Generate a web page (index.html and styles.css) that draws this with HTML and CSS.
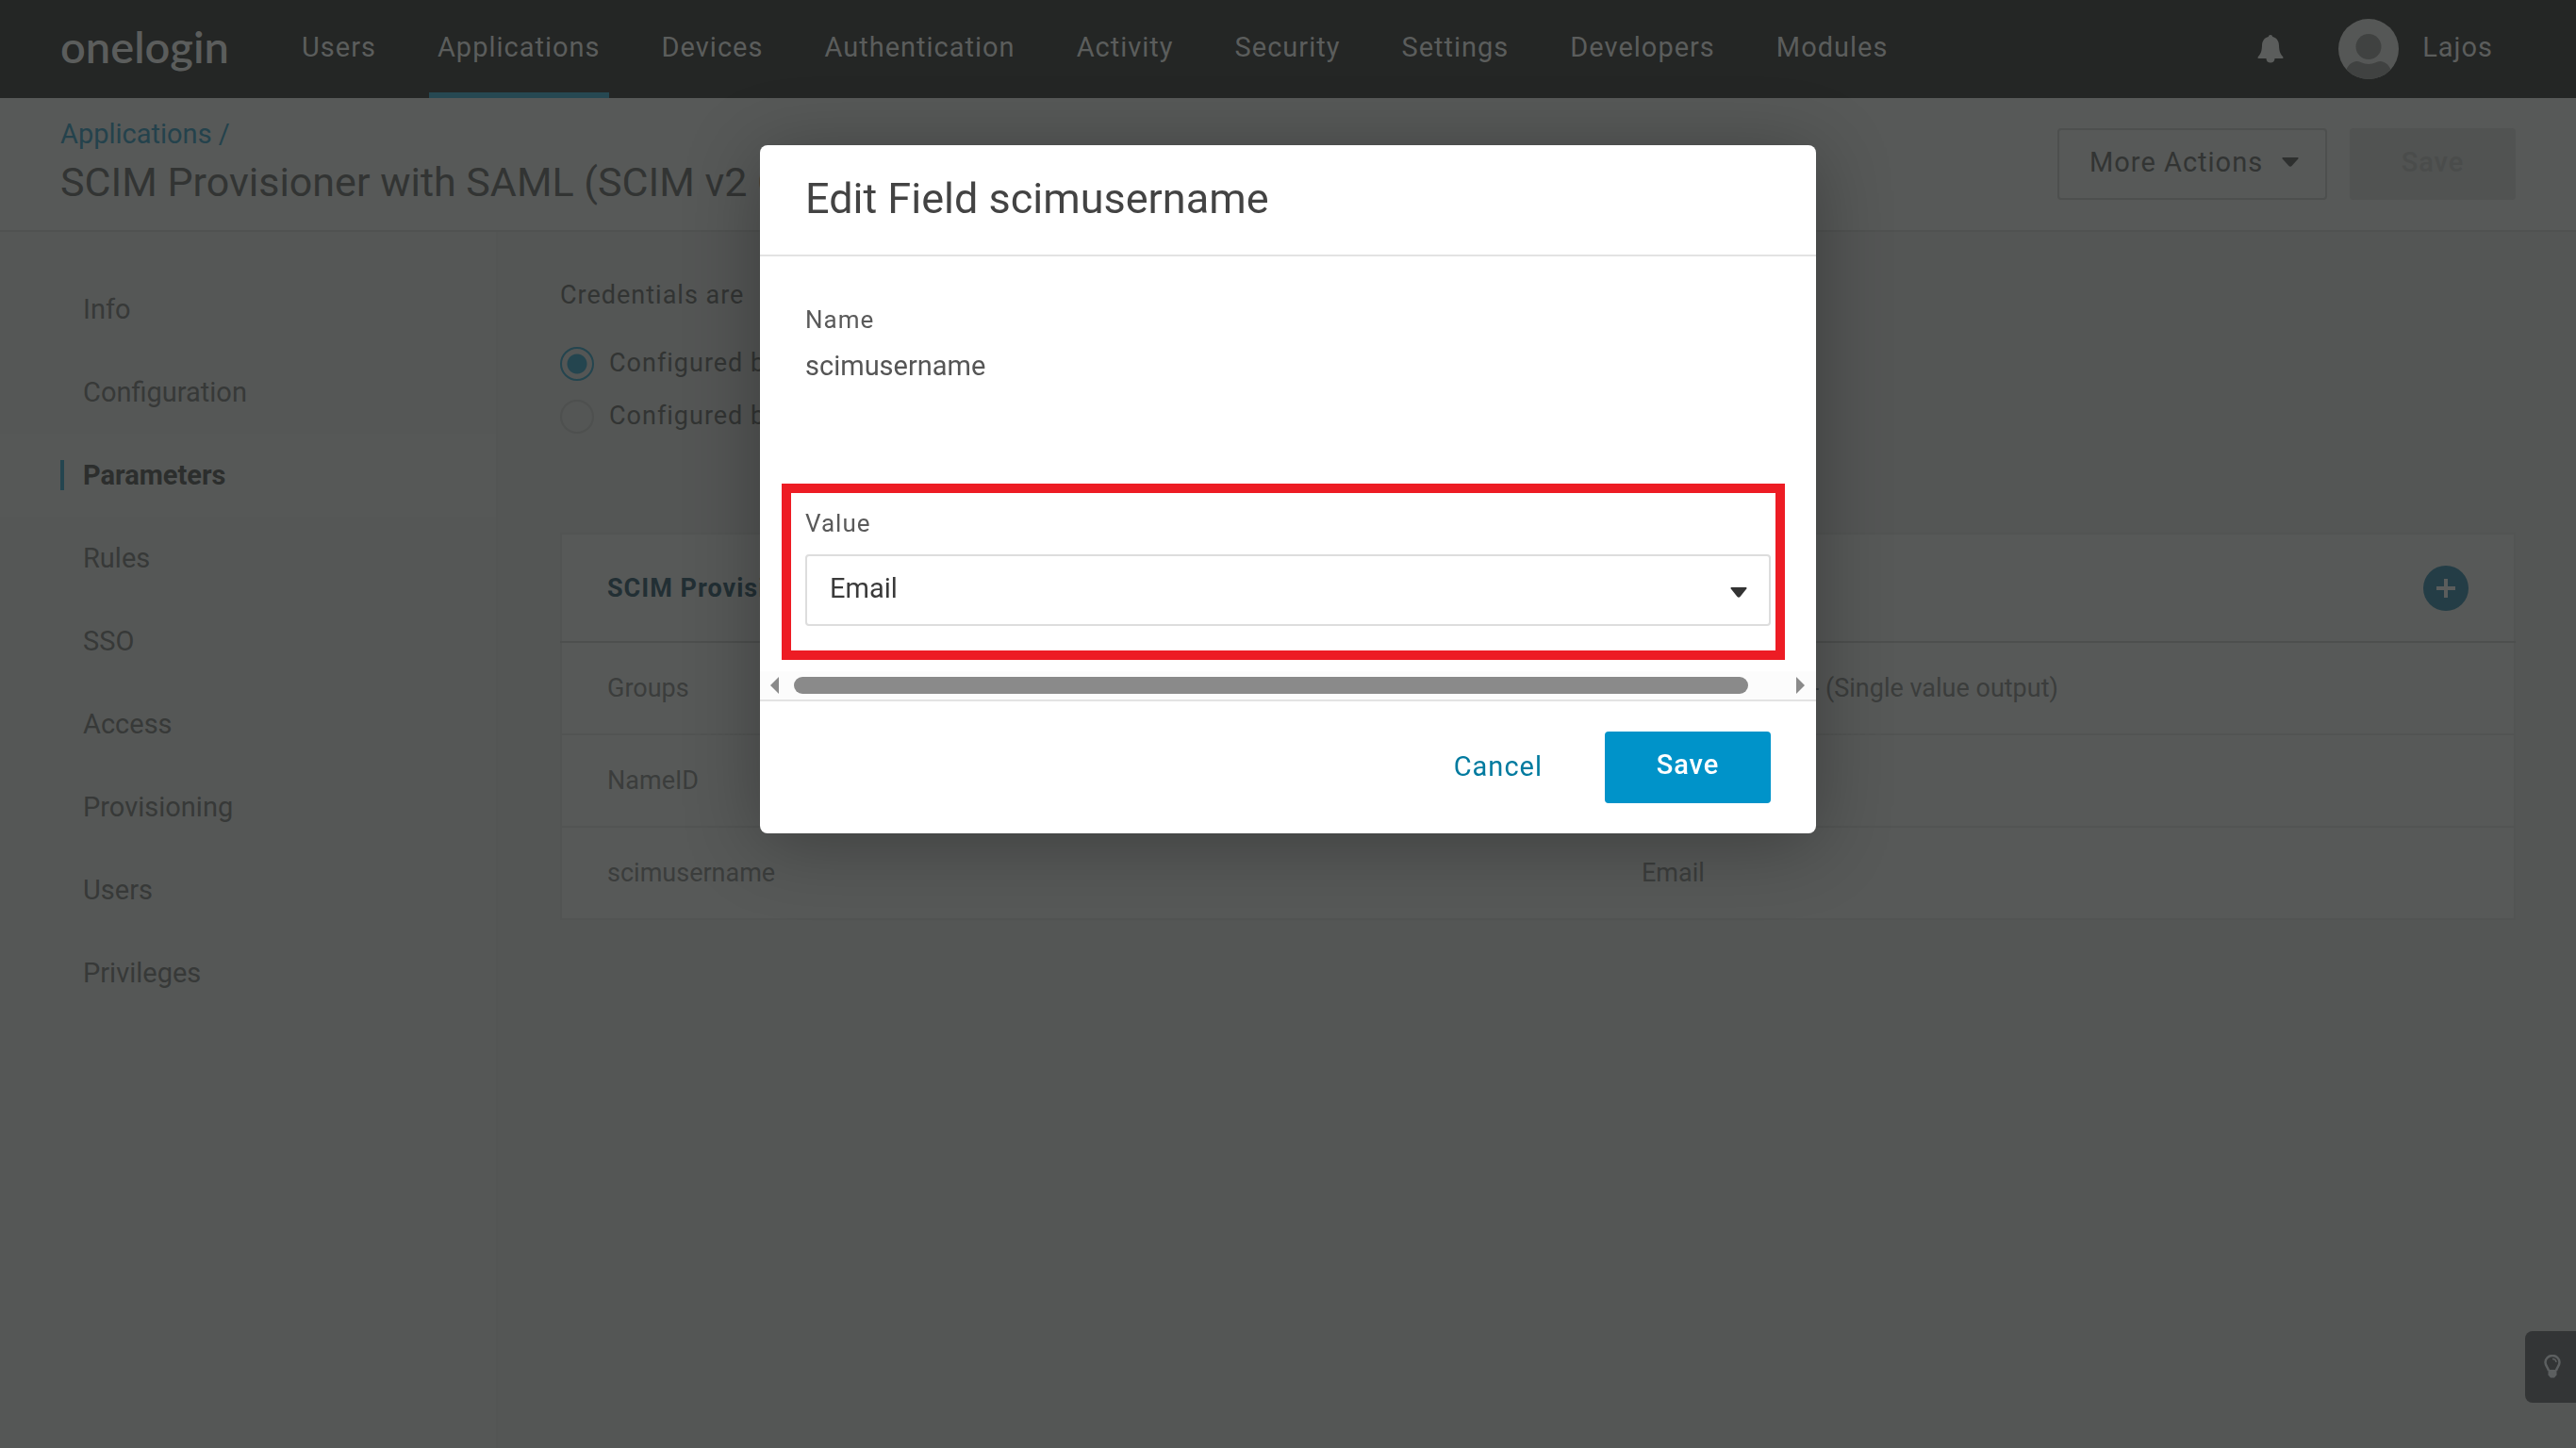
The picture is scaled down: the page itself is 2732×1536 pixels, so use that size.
FILE: index.html
```html
<!DOCTYPE html>
<html lang="en">
<head>
<meta charset="utf-8">
<title>Edit Field scimusername</title>
<link rel="stylesheet" href="styles.css">
</head>
<body>
<header class="topbar">
  <a class="logo" href="#">onelogin</a>
  <nav class="nav">
    <a href="#">Users</a>
    <a href="#" class="active">Applications</a>
    <a href="#">Devices</a>
    <a href="#">Authentication</a>
    <a href="#">Activity</a>
    <a href="#">Security</a>
    <a href="#">Settings</a>
    <a href="#">Developers</a>
    <a href="#">Modules</a>
  </nav>
  <div class="account">
    <button class="bell" type="button" aria-label="Notifications">
      <svg width="28" height="30" viewBox="0 0 28 30"><path d="M14 0c1.300 0 2 .8 2.200 2C20.600 3 22.800 6.400 23 11c.2 5.400 1 9 4 12 .8.900.8 2-.4 2H1.400C.2 25 .2 23.900 1 23c3-3 3.800-6.600 4-12 .2-4.600 2.400-8 6.800-9 .2-1.200.9-2 2.200-2zM9.500 25h9c0 3-2 4.500-4.500 4.500S9.500 28 9.500 25z"/></svg>
    </button>
    <svg class="avatar" width="64" height="64" viewBox="0 0 64 64"><defs><clipPath id="disc"><circle cx="32" cy="32" r="32"/></clipPath></defs><g clip-path="url(#disc)"><rect width="64" height="64" fill="#555756"/><g fill="#404241"><circle cx="32" cy="29.500" r="13.500"/><path d="M8 64V56c1-6 6-11 12-11 3 0 6 3 12 3s9-3 12-3c6 0 11 5 12 11v8z"/></g></g></svg>
    <a class="user" href="#">Lajos</a>
  </div>
</header>

<section class="pagehead">
  <div class="heading">
    <a class="crumb" href="#">Applications /</a>
    <h1>SCIM Provisioner with SAML (SCIM v2 Core)</h1>
  </div>
  <div class="actions">
    <button class="more" type="button">More Actions <svg width="18" height="10" viewBox="0 0 18 10"><path d="M1 0h16q1 .5.300 1.500L10.500 9q-1.500 1.500-3 0L.7 1.500Q0 .5 1 0z"/></svg></button>
    <button class="save-page" type="button" disabled>Save</button>
  </div>
</section>

<div class="layout">
  <nav class="sidebar">
    <a href="#">Info</a>
    <a href="#">Configuration</a>
    <a href="#" class="current">Parameters</a>
    <a href="#">Rules</a>
    <a href="#">SSO</a>
    <a href="#">Access</a>
    <a href="#">Provisioning</a>
    <a href="#">Users</a>
    <a href="#">Privileges</a>
  </nav>
  <main class="content">
    <fieldset class="credentials">
      <legend>Credentials are</legend>
      <label><input type="radio" name="cred" checked><span>Configured by</span></label>
      <label><input type="radio" name="cred"><span>Configured by</span></label>
    </fieldset>
    <table class="params">
      <thead>
        <tr><th>SCIM Provisioner</th><th class="add-cell"><button class="add" type="button" aria-label="Add"><svg width="20" height="20" viewBox="0 0 20 20"><path d="M8 0h4v8h8v4h-8v8H8v-8H0V8h8z"/></svg></button></th></tr>
      </thead>
      <tbody>
        <tr><td>Groups</td><td>- No transform - (Single value output)</td></tr>
        <tr><td>NameID</td><td></td></tr>
        <tr><td>scimusername</td><td>Email</td></tr>
      </tbody>
    </table>
  </main>
</div>

<button class="tip" type="button" aria-label="Tips">
  <svg width="18" height="26" viewBox="0 0 18 26"><path d="M5 17C4.500 13.500 1.500 12 1.500 8A7.500 7 0 0 1 16.500 8C16.500 12 13.500 13.500 13 17" fill="none" stroke="#5c5f60" stroke-width="2.500"/><path d="M4.500 16h9v5.500L11 24.500H7L4.500 21.500z" fill="#5c5f60"/><path d="M9 4.500Q12.500 4.500 13 8" fill="none" stroke="#5c5f60" stroke-width="1.500"/></svg>
</button>

<div class="overlay">
  <form class="modal" role="dialog" aria-labelledby="dialog-title">
    <h2 id="dialog-title">Edit Field scimusername</h2>
    <div class="modal-body">
      <div class="name-field">
        <div class="label">Name</div>
        <div class="name-value">scimusername</div>
      </div>
      <div class="highlight">
        <label class="label" for="value">Value</label>
        <div class="select">
          <select id="value"><option>Email</option></select>
          <svg width="18" height="12" viewBox="0 0 18 12"><path d="M1 0h16q1 .5.300 1.500L10.500 10q-1.500 1.500-3 0L.7 1.500Q0 .5 1 0z"/></svg>
        </div>
      </div>
    </div>
    <div class="scrollbar">
      <svg width="10" height="18" viewBox="0 0 10 18"><path d="M9 0v18L0 9z"/></svg>
      <div class="thumb"></div>
      <svg width="10" height="18" viewBox="0 0 10 18"><path d="M0 0v18l9-9z"/></svg>
    </div>
    <div class="modal-foot">
      <button class="cancel" type="button">Cancel</button>
      <button class="save" type="submit">Save</button>
    </div>
  </form>
</div>
</body>
</html>
```
FILE: styles.css
```css
* { box-sizing: border-box; }
html, body { height: 100%; }
body {
  margin: 0;
  display: flex;
  flex-direction: column;
  overflow: hidden;
  background: #545655;
  color: #323433;
  font: 29px/32px Roboto, sans-serif;
}
a { color: inherit; text-decoration: none; }
button, select { font: inherit; color: inherit; letter-spacing: inherit; }
button { border: 0; padding: 0; background: none; }
svg { display: block; flex: none; }

.topbar {
  flex: none;
  display: flex;
  align-items: stretch;
  height: 104px;
  padding: 0 88px 0 64px;
  background: #242625;
  color: #5b5d5c;
  letter-spacing: 1px;
}
.logo {
  width: 247px;
  padding-top: 17px;
  font: 600 47px/64px Lato, sans-serif;
  letter-spacing: 0;
}
.nav { display: flex; gap: 47px; }
.nav a { padding: 34px 9px 0; border-bottom: 6px solid transparent; white-space: nowrap; }
.nav .active { border-color: #264852; }
.account { display: flex; align-items: center; margin-left: auto; }
.bell { margin-right: 58px; fill: #5b5d5c; }
.user { margin: 0 0 4px 25px; }

.pagehead {
  flex: none;
  display: flex;
  justify-content: space-between;
  height: 142px;
  padding: 18px 64px 0;
  background: #575958;
  border-bottom: 2px solid #505251;
}
.crumb { display: block; line-height: 40px; color: #24424c; }
h1 { margin: 0; font-weight: 400; font-size: 43px; line-height: 56px; padding-top: 3px; white-space: nowrap; }
.actions { display: flex; gap: 24px; padding-top: 14px; letter-spacing: 1px; }
.actions button { height: 76px; border-radius: 4px; padding-bottom: 4px; }
.more { display: flex; align-items: center; gap: 20px; width: 286px; padding-left: 32px; border: 2px solid #4d4f4e; }
.more svg { fill: #2e302f; }
.save-page { width: 176px; background: #515352; color: #4a4c4b; font-weight: 500; }

.layout { flex: 1; display: flex; }
.sidebar { width: 528px; padding-top: 38px; background: #555756; border-right: 2px solid #535554; }
.sidebar a { display: flex; align-items: center; height: 88px; padding-left: 88px; color: #373938; }
.sidebar .current {
  padding-left: 64px;
  background: #565857;
  color: #2c2e2d;
  font-weight: 700;
}
.current::before { content: ""; width: 4px; height: 32px; margin-right: 20px; background: #24454f; }

.content { flex: 1; padding: 51px 64px 0 66px; }
.credentials { margin: 0; padding: 0; border: 0; font-size: 27px; letter-spacing: 1px; }
.credentials legend { padding: 0; line-height: 32px; margin-bottom: 39px; }
.credentials label { display: flex; gap: 16px; height: 36px; margin-bottom: 20px; line-height: 34px; white-space: nowrap; }
.credentials input {
  appearance: none;
  width: 36px;
  height: 36px;
  margin: 0;
  border: 2px solid #4e504f;
  border-radius: 50%;
}
.credentials input:checked { border-color: #24454f; background: radial-gradient(circle, #24454f 10px, transparent 11px); }

.params {
  width: 100%;
  margin-top: 85px;
  border: 2px solid #525453;
  border-collapse: collapse;
  table-layout: fixed;
  background: #575958;
  font-size: 27px;
}
.params th { height: 115px; padding: 0 48px; text-align: left; letter-spacing: 1px; color: #222f34; border-bottom: 2px solid #4d4f4e; }
.params th:first-child { width: 1098px; }
.params .add-cell { text-align: right; letter-spacing: 0; }
.params td { height: 98px; padding: 0 48px; border-bottom: 2px solid #525453; color: #3b3d3c; }
.add { display: inline-flex; align-items: center; justify-content: center; width: 48px; height: 48px; border-radius: 50%; background: #243d46; fill: #5b5d5c; vertical-align: middle; }

.tip {
  position: fixed;
  right: 0;
  bottom: 48px;
  display: flex;
  align-items: center;
  width: 54px;
  height: 76px;
  padding-left: 20px;
  border-radius: 8px 0 0 8px;
  background: #333536;
}

.overlay { position: fixed; inset: 0; display: flex; justify-content: center; align-items: flex-start; padding-top: 154px; }
.modal { width: 1120px; border-radius: 8px; background: #fff; color: #434343; box-shadow: 0 10px 80px rgba(0, 0, 0, .3); }
h2 { margin: 0; padding: 29px 48px 31px; font-weight: 400; font-size: 45px; line-height: 56px; border-bottom: 2px solid #e3e3e3; }
.modal-body { padding: 51px 33px 12px 23px; }
.name-field { padding: 0 25px; margin-bottom: 109px; }
.label { display: block; font-size: 26px; line-height: 32px; letter-spacing: 1px; color: #5a5a5a; }
.name-value { margin-top: 17px; line-height: 32px; color: #555; }
.highlight { padding: 16px 5px 26px 15px; border: 10px solid #ed1c24; }
.select { position: relative; margin-top: 17px; }
.select select { appearance: none; display: block; width: 100%; height: 76px; padding: 0 24px 4px; border: 2px solid #ddd; border-radius: 4px; background: #fff; color: #3a3a3a; }
.select svg { position: absolute; right: 25px; top: 35px; fill: #333; }
.scrollbar { display: flex; align-items: center; height: 32px; padding: 0 11px; background: #fcfcfc; border-bottom: 2px solid #e3e3e3; fill: #8a8a8a; }
.thumb { flex: 1; height: 18px; margin: 0 51px 0 15px; border-radius: 9px; background: #8a8a8a; }
.modal-foot { display: flex; justify-content: flex-end; align-items: center; gap: 66px; padding: 32px 48px; letter-spacing: 1px; }
.cancel { padding-bottom: 2px; color: #007a9f; }
.save { width: 176px; height: 76px; padding-bottom: 7px; border-radius: 4px; background: #0093c9; color: #fff; font-weight: 500; }
```
